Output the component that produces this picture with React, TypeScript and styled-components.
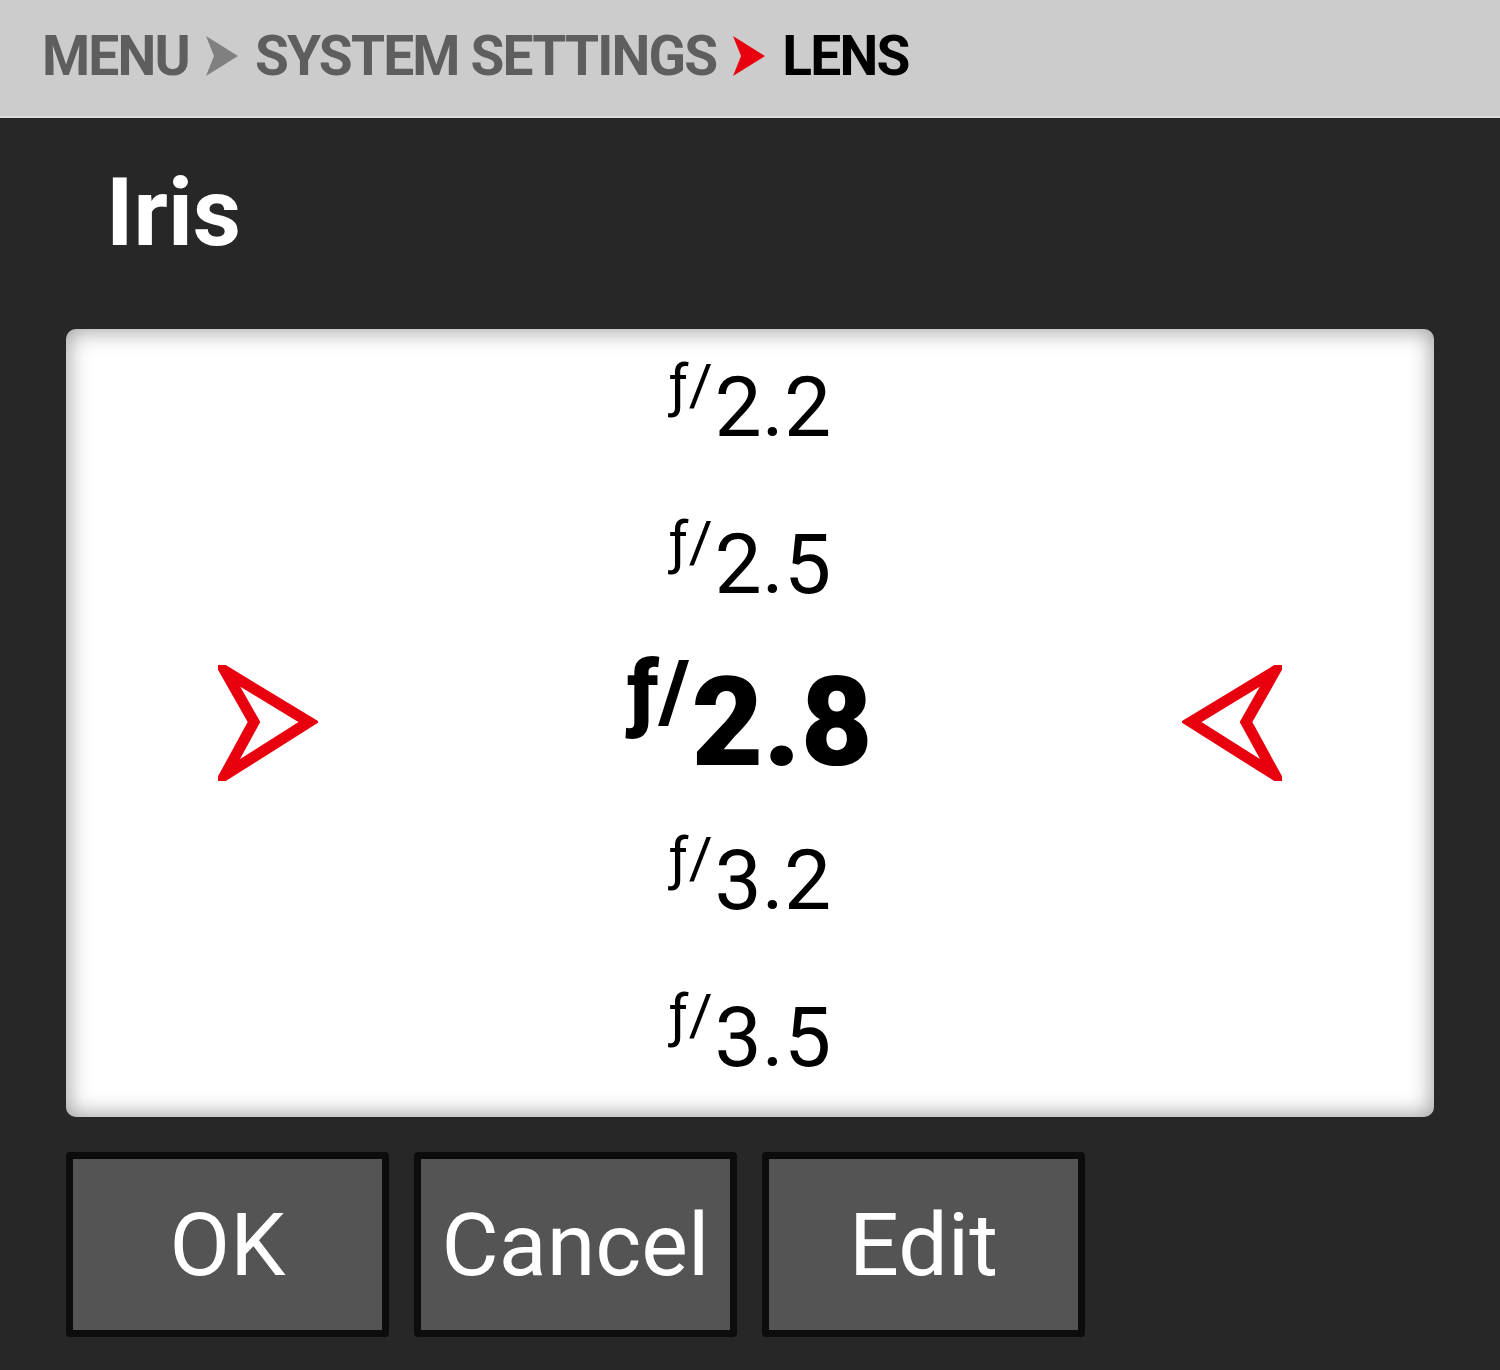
import styled, { createGlobalStyle } from 'styled-components';

const GlobalStyle = createGlobalStyle`
  html, body {
    margin: 0;
    padding: 0;
    background: #272727;
  }
  body {
    font-family: Roboto, "Liberation Sans", sans-serif;
  }
`;

const STOPS = ['2.2', '2.5', '2.8', '3.2', '3.5'];
const SELECTED = '2.8';

const Crumb = ({ color }: { color: string }) => (
  <svg width="32" height="40" viewBox="0 0 32 40">
    <polygon points="0,0 32,20 0,40 8,20" fill={color} />
  </svg>
);

const Pointer = ({ flip }: { flip?: boolean }) => (
  <svg
    width="100"
    height="116"
    viewBox="0 0 100 116"
    style={{ transform: flip ? 'scaleX(-1)' : undefined }}
  >
    <polygon
      points="7,6 91,57 7,110 36,57"
      fill="none"
      stroke="#e8000f"
      strokeWidth="11"
      strokeLinejoin="miter"
    />
  </svg>
);

export default function App() {
  return (
    <Screen>
      <GlobalStyle />
      <Header>
        <CrumbText $tone="muted">MENU</CrumbText>
        <Crumb color="#808080" />
        <CrumbText $tone="muted">SYSTEM SETTINGS</CrumbText>
        <Crumb color="#e8000f" />
        <CrumbText $tone="current">LENS</CrumbText>
      </Header>

      <Title>Iris</Title>

      <Picker>
        {STOPS.map((stop) => {
          const active = stop === SELECTED;
          return (
            <StopRow key={stop}>
              {active ? <Pointer /> : <Spacer />}
              <StopLabel $active={active}>
                <Prefix $active={active}>ƒ/</Prefix>
                {stop}
              </StopLabel>
              {active ? <Pointer flip /> : <Spacer />}
            </StopRow>
          );
        })}
      </Picker>

      <Actions>
        <ActionButton>OK</ActionButton>
        <ActionButton>Cancel</ActionButton>
        <ActionButton>Edit</ActionButton>
      </Actions>
    </Screen>
  );
}

const Screen = styled.div`
  width: 1500px;
  height: 1370px;
  background: #272727;
  display: flex;
  flex-direction: column;
  overflow: hidden;
`;

const Header = styled.header`
  height: 118px;
  border-bottom: 2px solid #dcdcdc;
  background: #cccccc;
  display: flex;
  align-items: center;
  gap: 17px;
  padding: 0 0 4px 42px;
  box-sizing: border-box;
`;

const CrumbText = styled.span<{ $tone: 'muted' | 'current' }>`
  font-family: Roboto, "Liberation Sans", sans-serif;
  font-weight: 700;
  font-size: 55px;
  letter-spacing: -1.8px;
  line-height: 1;
  color: ${(p) => (p.$tone === 'current' ? '#000' : '#5e5e5e')};
`;

const Title = styled.h1`
  margin: 0;
  padding: 39px 0 0 106px;
  height: 211px;
  box-sizing: border-box;
  font-size: 94px;
  font-weight: 700;
  line-height: 1.2;
  color: #fff;
`;

const Picker = styled.section`
  margin: 0 66px;
  height: 788px;
  border-radius: 10px;
  background: #fff;
  box-shadow: inset 0 0 22px 2px rgba(0, 0, 0, 0.38);
  display: flex;
  flex-direction: column;
  padding: 0 152px;
  box-sizing: border-box;
`;

const StopRow = styled.div`
  flex: 1;
  display: flex;
  align-items: center;
  justify-content: space-between;
`;

const Spacer = styled.div`
  width: 100px;
`;

const StopLabel = styled.div<{ $active: boolean }>`
  font-family: Roboto, "Liberation Sans", sans-serif;
  font-size: ${(p) => (p.$active ? '124px' : '84px')};
  font-weight: ${(p) => (p.$active ? 900 : 400)};
  line-height: 1;
  color: #000;
  white-space: nowrap;
`;

const Prefix = styled.span<{ $active: boolean }>`
  font-size: ${(p) => (p.$active ? '86px' : '58px')};
  position: relative;
  top: ${(p) => (p.$active ? '-44px' : '-31px')};
  margin-right: 2px;
`;

const Actions = styled.div`
  display: flex;
  gap: 25px;
  margin: 35px 0 0 66px;
`;

const ActionButton = styled.button`
  width: 323px;
  height: 185px;
  box-sizing: border-box;
  border: 7px solid #0c0c0c;
  border-radius: 4px;
  background: #545454;
  color: #fff;
  font-family: Roboto, "Liberation Sans", sans-serif;
  font-size: 88px;
  font-weight: 400;
  padding: 0;
  cursor: pointer;
`;
